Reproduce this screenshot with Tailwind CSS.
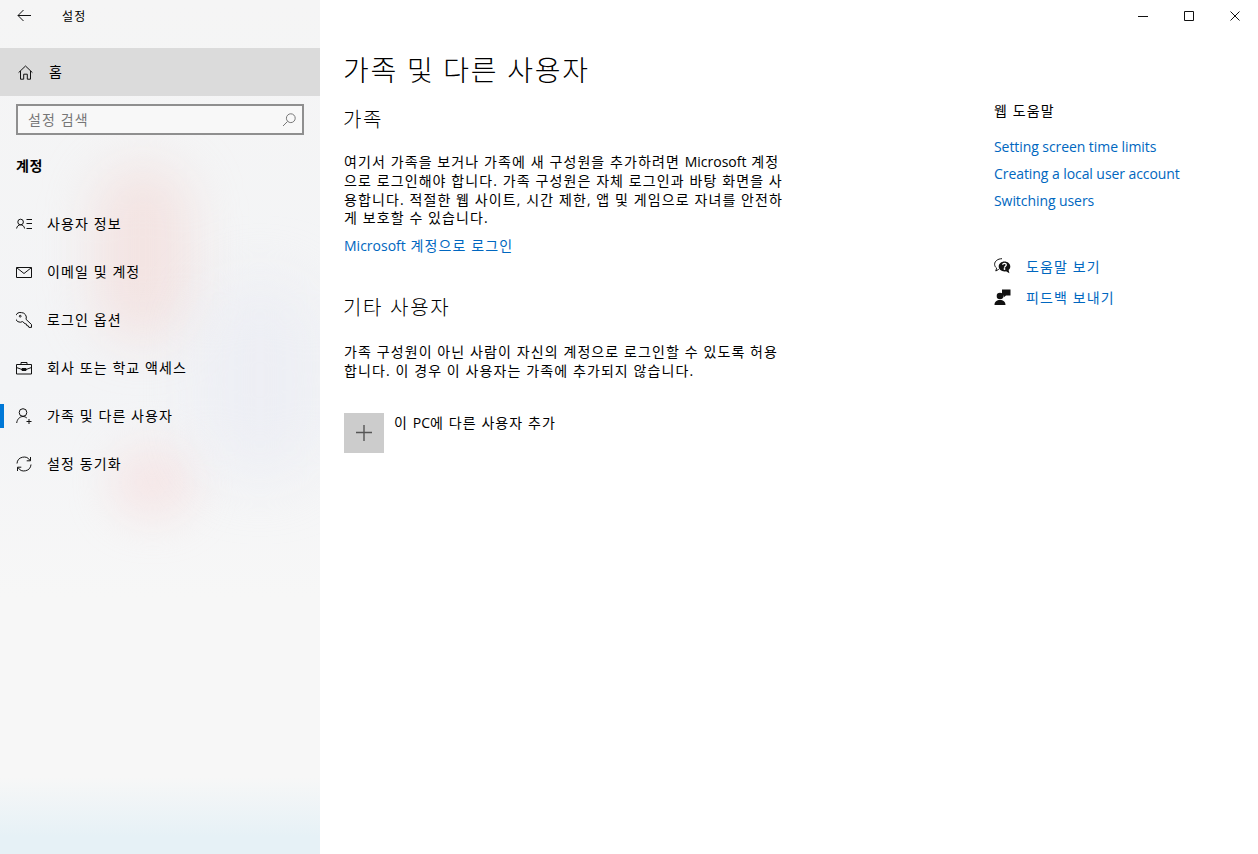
<!DOCTYPE html>
<html lang="ko">
<head>
    <meta charset="UTF-8">
    <title>설정</title>
    <script src="https://cdn.jsdelivr.net/npm/@tailwindcss/browser@4"></script>
</head>
<body class="bg-white h-[854px] overflow-hidden font-['Open_Sans','Noto_Sans_CJK_KR',sans-serif] text-[14px] text-black tracking-[1.1px]">
<div class="flex h-[854px]">
    <!-- sidebar -->
    <aside class="relative w-[320px] shrink-0 h-full overflow-hidden bg-[linear-gradient(180deg,#f5f5f5_0%,#f3f4f6_45%,#f7f7f7_70%,#f7f7f7_91%,#e6f1f6_98%,#e6f1f6_100%)]">
        <div class="absolute left-[95px] top-[165px] w-[95px] h-[175px] rounded-full bg-[#f3d3d0]/50 blur-[26px]"></div>
        <div class="absolute left-[110px] top-[445px] w-[85px] h-[75px] rounded-full bg-[#f6d8d8]/45 blur-[20px]"></div>
        <div class="absolute left-[200px] top-[280px] w-[120px] h-[200px] rounded-full bg-[#e8e9f3]/50 blur-[30px]"></div>

        <div class="relative">
            <div class="flex items-center h-[32px] pl-[16px]">
                <svg class="w-[16px] h-[16px]" viewBox="0 0 16 16" fill="none" stroke="#111" stroke-width="1"><path d="M2 7.500h13M7.500 2 2 7.500l5.500 5.500"/></svg>
                <span class="ml-[30px] mt-[1px] text-[12px]">설정</span>
            </div>
            <div class="flex items-center h-[48px] mt-[16px] pl-[18px] bg-[#dbdbdb]">
                <svg class="w-[15px] h-[15px]" viewBox="0 0 15 15" fill="none" stroke="#111" stroke-width="1"><path d="M.6 7.600 7.500 1l6.900 6.600M2.500 6v8.200h3.200V9.200h3.600v5h3.200V6"/></svg>
                <span class="ml-[16px] mb-[2px]">홈</span>
            </div>
            <div class="mx-[16px] mt-[8px] h-[31px] border-2 border-[#8f8f8f] bg-[#f8f8f8] flex items-center justify-between pl-[10px] pr-[6px] text-[#767676]">
                <span>설정 검색</span>
                <svg class="w-[14px] h-[14px]" viewBox="0 0 14 14" fill="none" stroke="#777" stroke-width="1"><circle cx="8.800" cy="5.200" r="4.400"/><path d="M5.600 8.400 1 13"/></svg>
            </div>
            <div class="mt-[20px] pl-[16px] h-[22px] leading-[22px] font-bold tracking-[.5px]">계정</div>

            <nav class="mt-[23px]">
                <div class="flex items-center h-[48px] pl-[16px]">
                    <svg class="w-[16px] h-[16px]" viewBox="0 0 16 16" fill="none" stroke="#111" stroke-width="1"><circle cx="4.600" cy="6" r="2.800"/><path d="M.6 12.500c.4-2.400 2-3.700 4-3.700s3.600 1.300 4 3.700M10.500 3.500H16M10.500 7.500H16M10.500 12.500H16"/></svg>
                    <span class="ml-[15px] mb-[2px]">사용자 정보</span>
                </div>
                <div class="flex items-center h-[48px] pl-[16px]">
                    <svg class="w-[16px] h-[16px]" viewBox="0 0 16 16" fill="none" stroke="#111" stroke-width="1"><path d="M.5 3.500h15v10H.5zM.8 3.800 8 9.500l7.200-5.700"/></svg>
                    <span class="ml-[15px] mb-[2px]">이메일 및 계정</span>
                </div>
                <div class="flex items-center h-[48px] pl-[16px]">
                    <svg class="w-[16px] h-[16px]" viewBox="0 0 16 16" fill="none" stroke="#111" stroke-width="1"><path d="M5.500.6a4.900 4.900 0 0 1 4.500 6.700l5.500 5.200v2.900h-2.600l-.6-1.500-1.500-.3-.3-1.500-1.500-.4-2.400-2.100A4.900 4.900 0 1 1 5.500.6z"/><circle cx="4.200" cy="4.200" r=".9"/></svg>
                    <span class="ml-[15px] mb-[2px]">로그인 옵션</span>
                </div>
                <div class="flex items-center h-[48px] pl-[16px]">
                    <svg class="w-[16px] h-[16px]" viewBox="0 0 16 16" fill="none" stroke="#111" stroke-width="1"><path d="M.5 4.500h15v9.500H.5zM5 4.500V2.500h6v2M.5 7.500 6 9.500h4l5.500-2M6 8.500h4v2H6z"/></svg>
                    <span class="ml-[15px] mb-[2px]">회사 또는 학교 액세스</span>
                </div>
                <div class="relative flex items-center h-[48px] pl-[16px]">
                    <div class="absolute left-0 top-[12px] w-[4px] h-[24px] bg-[#0078d7]"></div>
                    <svg class="w-[16px] h-[16px]" viewBox="0 0 16 16" fill="none" stroke="#111" stroke-width="1"><circle cx="7" cy="4.500" r="3.800"/><path d="M.7 15c.4-3.700 3-6.500 6.300-6.500 1.500 0 2.800.5 3.800 1.500M10.500 13.500h5M13 11v5"/></svg>
                    <span class="ml-[15px] mb-[2px]">가족 및 다른 사용자</span>
                </div>
                <div class="flex items-center h-[48px] pl-[16px]">
                    <svg class="w-[16px] h-[16px]" viewBox="0 0 16 16" fill="none" stroke="#111" stroke-width="1"><path d="M1 7.500A7 7 0 0 1 14 4.500M15 8.500A7 7 0 0 1 2 11.500M14.500 1v3.800h-3.800M1.500 15v-3.800h3.800"/></svg>
                    <span class="ml-[15px] mb-[2px]">설정 동기화</span>
                </div>
            </nav>
        </div>
    </aside>

    <!-- main -->
    <main class="relative flex-1 flex">
        <div class="w-[674px] shrink-0 pl-[23px] pt-[48px]">
            <h1 class="text-[28px] leading-[44px] font-light tracking-[1.7px]">가족 및 다른 사용자</h1>
            <h2 class="mt-[13px] text-[20px] leading-[30px] font-light tracking-[1.7px]">가족</h2>
            <p class="mt-[18px] ml-px leading-[18.800px]">여기서 가족을 보거나 가족에 새 구성원을 추가하려면 <span class="tracking-normal">Microsoft</span> 계정<br>으로 로그인해야 합니다. 가족 구성원은 자체 로그인과 바탕 화면을 사<br>용합니다. 적절한 웹 사이트, 시간 제한, 앱 및 게임으로 자녀를 안전하<br>게 보호할 수 있습니다.</p>
            <a class="block mt-[8px] ml-px leading-[20px] text-[#0067c0]"><span class="tracking-normal">Microsoft</span> 계정으로 로그인</a>
            <h2 class="mt-[37px] text-[20px] leading-[30px] font-light tracking-[1.7px]">기타 사용자</h2>
            <p class="mt-[20px] ml-px leading-[18.800px]">가족 구성원이 아닌 사람이 자신의 계정으로 로그인할 수 있도록 허용<br>합니다. 이 경우 이 사용자는 가족에 추가되지 않습니다.</p>
            <div class="mt-[32px] ml-px flex items-start">
                <div class="w-[40px] h-[40px] bg-[#cccccc] flex items-center justify-center">
                    <svg class="w-[16px] h-[16px]" viewBox="0 0 16 16" fill="none" stroke="#555" stroke-width="1.400"><path d="M0 7.500h16M8 0v16"/></svg>
                </div>
                <span class="ml-[10px] leading-[20px]">이 <span class="tracking-normal">PC</span>에 다른 사용자 추가</span>
            </div>
        </div>

        <div class="pt-[101px]">
            <div class="leading-[20px]">웹 도움말</div>
            <div class="mt-[16px] flex flex-col gap-[7px] text-[#0067c0] leading-[20px] tracking-[-.07px]">
                <a>Setting screen time limits</a>
                <a>Creating a local user account</a>
                <a>Switching users</a>
            </div>
            <div class="mt-[45px] flex items-center h-[20px]">
                <svg class="w-[17px] h-[16px]" viewBox="0 0 17 16"><path fill="none" stroke="#111" d="M8 .7C3.800.7.600 3.200.600 6.300c0 1.500.7 2.800 2 3.800L1.800 13l3-1.700"/><path fill="#111" d="M10.500 3.500c3.200 0 5.800 2.200 5.800 5 0 1.400-.6 2.600-1.700 3.500l.8 3.200-3.400-2c-.5.1-1 .2-1.500.2-3.200 0-5.800-2.200-5.800-4.900s2.600-5 5.800-5z"/><circle cx="10.500" cy="11" r=".9" fill="#fff"/><path fill="none" stroke="#fff" stroke-width="1.300" d="M8.700 6.800c0-1 .8-1.500 1.800-1.500s1.800.6 1.800 1.500c0 1.400-1.800 1.300-1.800 2.900"/></svg>
                <a class="ml-[15px] text-[#0067c0]">도움말 보기</a>
            </div>
            <div class="mt-[11px] flex items-center h-[20px]">
                <svg class="w-[17px] h-[16px]" viewBox="0 0 17 16" fill="#111"><circle cx="6" cy="7" r="3.300"/><path d="M.5 16c0-3.300 2.300-5 5.500-5s5.500 1.700 5.500 5zM8 .5h8.500v6h-4.500L9.500 8.500V6.500H8z"/></svg>
                <a class="ml-[15px] text-[#0067c0]">피드백 보내기</a>
            </div>
        </div>

        <!-- window buttons -->
        <div class="absolute right-[18px] top-[11px] flex items-center gap-[36px]">
            <svg class="w-[10px] h-[10px]" viewBox="0 0 10 10" fill="none" stroke="#111" stroke-width="1"><path d="M0 5.500h10"/></svg>
            <svg class="w-[10px] h-[10px]" viewBox="0 0 10 10" fill="none" stroke="#111" stroke-width="1"><path d="M.5.500h9v9h-9z"/></svg>
            <svg class="w-[10px] h-[10px]" viewBox="0 0 10 10" fill="none" stroke="#111" stroke-width="1"><path d="M.5.500l9 9M9.500.500l-9 9"/></svg>
        </div>
    </main>
</div>
</body>
</html>
